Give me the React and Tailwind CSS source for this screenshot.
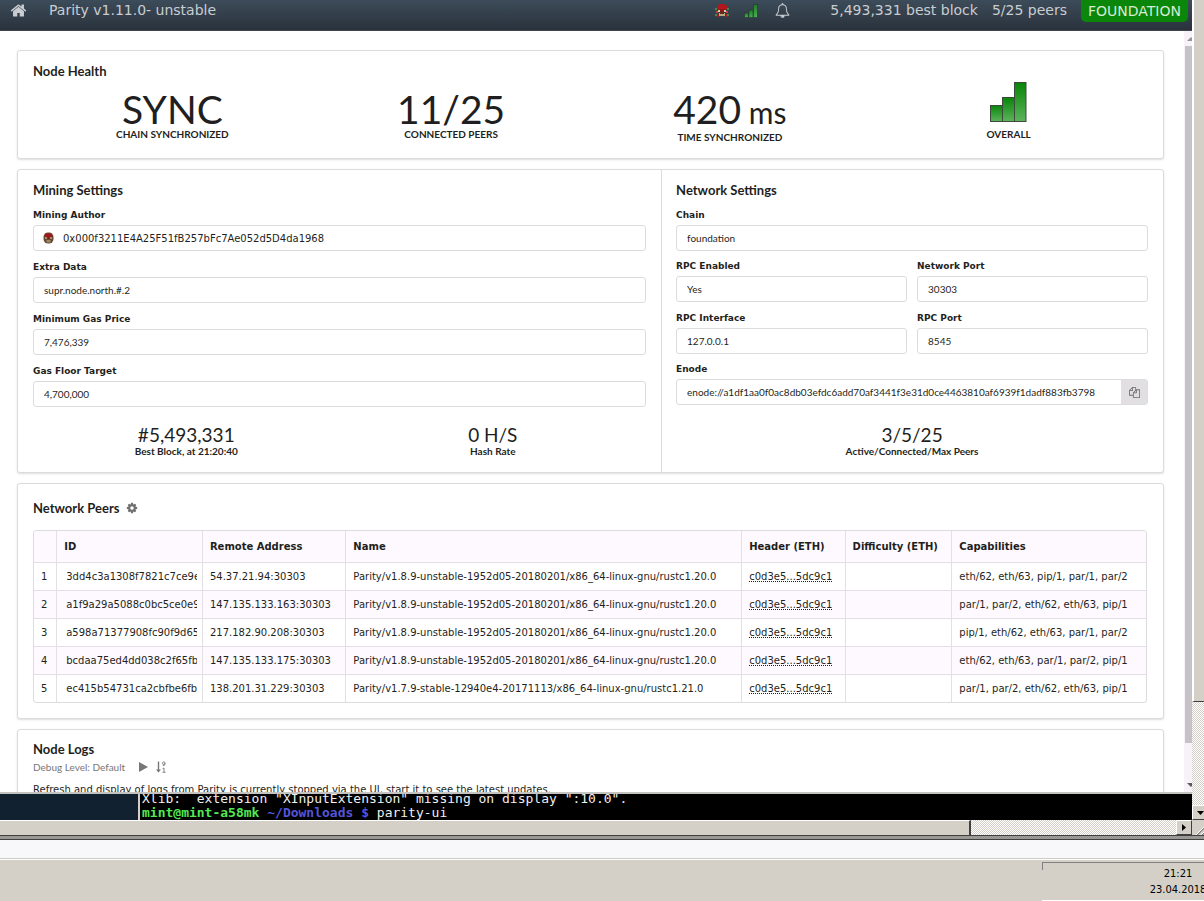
import React from "react";

const LATO = "font-['Lato',sans-serif]";
const DITHER = "bg-[repeating-conic-gradient(#ffffff_0_25%,#d4d0c8_0_50%)] bg-[length:2px_2px]";
const RAISED = "border border-t-white border-l-white border-r-[#404040] border-b-[#404040] bg-[#d4d0c8]";

const PATHS = {
  home: "M1472 992v480q0 26-19 45t-45 19h-384v-384h-256v384h-384q-26 0-45-19t-19-45v-480q0-1 .5-3t.5-3l575-474 575 474q1 2 1 6zm223-69l-62 74q-8 9-21 11h-3q-13 0-21-7l-692-577-692 577q-12 8-24 7-13-2-21-11l-62-74q-8-10-7-23.5t11-21.5l719-599q32-26 76-26t76 26l244 204v-195q0-14 9-23t23-9h192q14 0 23 9t9 23v408l219 182q10 8 11 21.5t-7 23.5z",
  bell: "M912 1696q0-16-16-16-59 0-101.5-42.5t-42.5-101.5q0-16-16-16t-16 16q0 73 51.5 124.5t124.5 51.5q16 0 16-16zm-666-288h1300q-266-300-266-832 0-51-24-105t-69-103-121.5-80.5-169.5-31.5-169.5 31.5-121.5 80.5-69 103-24 105q0 532-266 832zm1482 0q0 52-38 90t-90 38h-448q0 106-75 181t-181 75-181-75-75-181h-448q-52 0-90-38t-38-90q50-42 91-88t85-119.5 74.5-158.5 50-206 19.5-260q0-152 117-282.5t307-158.5q-8-19-8-39 0-40 28-68t68-28 68 28 28 68q0 20-8 39 190 28 307 158.5t117 282.5q0 139 19.5 260t50 206 74.5 158.5 85 119.5 91 88z",
  copy: "M1696 384q40 0 68 28t28 68v1216q0 40-28 68t-68 28h-960q-40 0-68-28t-28-68v-288h-544q-40 0-68-28t-28-68v-672q0-40 20-88t48-76l408-408q28-28 76-48t88-20h416q40 0 68 28t28 68v328q68-40 128-40h416zm-544 213l-299 299h299v-299zm-640-384l-299 299h299v-299zm196 647l316-316v-416h-384v416q0 40-28 68t-68 28h-416v640h512v-256q0-40 20-88t48-76zm956 804v-1152h-384v416q0 40-28 68t-68 28h-416v640h896z",
  cog: "M1152 896q0-106-75-181t-181-75-181 75-75 181 75 181 181 75 181-75 75-181zm512-109v222q0 12-8 23t-20 13l-185 28q-19 54-39 91 35 50 107 138 10 12 10 25t-9 23q-27 37-99 108t-94 71q-12 0-26-9l-138-108q-44 23-91 38-16 136-29 186-7 28-36 28h-222q-14 0-24.5-8.5t-11.5-21.5l-28-184q-49-16-90-37l-141 107q-10 9-25 9-14 0-25-11-126-114-165-168-7-10-7-23 0-12 8-23 15-21 51-66.5t54-70.5q-27-50-41-99l-183-27q-13-2-21-12.5t-8-23.5v-222q0-12 8-23t19-13l186-28q14-46 39-92-40-57-107-138-10-12-10-24 0-10 9-23 26-36 98.5-107.5t94.5-71.5q13 0 26 10l138 107q44-23 91-38 16-136 29-186 7-28 36-28h222q14 0 24.5 8.5t11.5 21.5l28 184q49 16 90 37l142-107q9-9 24-9 13 0 25 10 129 119 165 170 7 8 7 22 0 12-8 23-15 21-51 66.5t-54 70.5q26 50 41 98l183 28q13 2 21 12.5t8 23.5z",
};

function Icon({ name, className }) {
  return (
    <svg viewBox="0 0 1792 1792" className={`shrink-0 fill-current ${className}`} aria-hidden="true">
      <path d={PATHS[name]} />
    </svg>
  );
}

function Creature() {
  return (
    <svg viewBox="0 0 16 16" className="size-4 shrink-0" aria-hidden="true">
      <path d="M6 2h4l3 2v3l-2 1H5L3 7V4z" fill="#b3161c" />
      <path d="M1 6h2v2H1zM13 6h2v2h-2zM1 12h2v2H1zM13 12h2v2h-2z" fill="#3f8a48" />
      <path d="M4 7h8v3H4z" fill="#8f1a1c" />
      <path d="M4 8h2v2H4zM10 8h2v2h-2z" fill="#d8cf9c" />
      <path d="M2 9h2v2H2zM12 9h2v2h-2z" fill="#c8442e" />
      <path d="M5 11h6v3H5z" fill="#b5a97c" />
      <path d="M6 10h4v2H6z" fill="#5e2a22" />
      <path d="M3 12h2v3H3zM11 12h2v3h-2z" fill="#b3161c" />
    </svg>
  );
}

function Avatar() {
  return (
    <svg viewBox="0 0 11 12" className="h-3 w-[11px] shrink-0" aria-hidden="true">
      <rect x="0.5" y="0.5" width="10" height="11" rx="4.5" fill="#6b4a35" />
      <path d="M2.500 1.500h6l1 3.500h-8z" fill="#a3161b" />
      <path d="M2 5h2v2H2zM7 5h2v2H7z" fill="#a98f68" />
      <path d="M3.500 8h4v2.500h-4z" fill="#998b60" />
      <path d="M4.500 5h2v2h-2z" fill="#7c1f1c" />
    </svg>
  );
}

function SmallSignal() {
  return (
    <svg viewBox="0 0 14 14" className="size-3.5 shrink-0" aria-hidden="true">
      <defs>
        <linearGradient id="small-bar" x1="0" y1="0" x2="0" y2="1">
          <stop offset="0" stopColor="#1b7d22" />
          <stop offset="1" stopColor="#4fae55" />
        </linearGradient>
      </defs>
      <g fill="url(#small-bar)" stroke="#22382f" strokeWidth="0.6">
        <rect x="0.5" y="9" width="4" height="4.500" />
        <rect x="5" y="6" width="4" height="7.500" />
        <rect x="9.500" y="0.5" width="4" height="13" />
      </g>
    </svg>
  );
}

function BigSignal() {
  return (
    <svg viewBox="0 0 37 40" className="-mt-[9px] mb-[5px] h-10 w-[37px]" role="img" aria-label="Good">
      <defs>
        <linearGradient id="bar" x1="0" y1="0" x2="0" y2="1">
          <stop offset="0" stopColor="#078607" />
          <stop offset="1" stopColor="#5db35d" />
        </linearGradient>
      </defs>
      <g fill="url(#bar)" stroke="#3f4a3f">
        <rect x="0.5" y="23.5" width="12" height="16" />
        <rect x="12.500" y="15.500" width="12" height="24" />
        <rect x="24.500" y="0.5" width="11.500" height="39" />
      </g>
    </svg>
  );
}

function SortDescending() {
  return (
    <svg viewBox="0 0 10 12" className="h-3 w-2.5" fill="none" stroke="currentColor" aria-hidden="true">
      <path d="M2.500 0.500V9" strokeWidth="1.400" />
      <path d="M0 8.500h5L2.500 11.500z" fill="currentColor" stroke="none" />
      <circle cx="7.800" cy="2.200" r="1.300" strokeWidth="0.900" />
      <path d="M9.100 2.200Q9.100 4.800 6.800 4.800" strokeWidth="0.900" />
      <path d="M6.600 7.600L8 7v4.300M6.500 11.300h3" strokeWidth="0.900" />
    </svg>
  );
}

function Card({ className = "", children }) {
  return (
    <section className={`rounded-[3px] border border-[#dcdcde] bg-white shadow-[0_1px_2px_rgba(34,36,38,0.15)] ${className}`}>
      {children}
    </section>
  );
}

function Title({ children }) {
  return <h2 className={`${LATO} text-[13px] font-bold leading-4`}>{children}</h2>;
}

function BigStat({ label, children }) {
  return (
    <div className={`${LATO} flex flex-col items-center`}>
      {children}
      <div className="text-[10px] font-bold leading-[14px]">{label}</div>
    </div>
  );
}

function Stat({ value, label }) {
  return (
    <div className={`${LATO} text-center`}>
      <div className="text-[19px] leading-[21px]">{value}</div>
      <div className="text-[10px] font-bold leading-3">{label}</div>
    </div>
  );
}

function Field({ id, label, value, icon, action }) {
  return (
    <div className="flex min-w-0 flex-col gap-1">
      <label htmlFor={id} className="text-[9px] font-bold leading-3">{label}</label>
      <div className="flex h-[26px] overflow-hidden rounded-[3px] border border-[#dcdcde]">
        {icon && <span className="flex items-center pl-[9px]">{icon}</span>}
        <input
          id={id}
          readOnly
          defaultValue={value}
          className={`min-w-0 flex-1 bg-transparent text-[10px] outline-none ${icon ? "px-[9px]" : "px-2.5 font-['Lato',sans-serif]"}`}
        />
        {action}
      </div>
    </div>
  );
}

const PEERS = [
  ["3dd4c3a1308f7821c7ce9e", "54.37.21.94:30303", "Parity/v1.8.9-unstable-1952d05-20180201/x86_64-linux-gnu/rustc1.20.0", "eth/62, eth/63, pip/1, par/1, par/2"],
  ["a1f9a29a5088c0bc5ce0e9", "147.135.133.163:30303", "Parity/v1.8.9-unstable-1952d05-20180201/x86_64-linux-gnu/rustc1.20.0", "par/1, par/2, eth/62, eth/63, pip/1"],
  ["a598a71377908fc90f9d65", "217.182.90.208:30303", "Parity/v1.8.9-unstable-1952d05-20180201/x86_64-linux-gnu/rustc1.20.0", "pip/1, eth/62, eth/63, par/1, par/2"],
  ["bcdaa75ed4dd038c2f65fb", "147.135.133.175:30303", "Parity/v1.8.9-unstable-1952d05-20180201/x86_64-linux-gnu/rustc1.20.0", "eth/62, eth/63, par/1, par/2, pip/1"],
  ["ec415b54731ca2cbfbe6fb", "138.201.31.229:30303", "Parity/v1.7.9-stable-12940e4-20171113/x86_64-linux-gnu/rustc1.21.0", "par/1, par/2, eth/62, eth/63, pip/1"],
];

function PeersTable() {
  const cell = "border-t border-l border-[#e3dfe4] px-[7px] first:border-l-0";
  return (
    <div className="mt-3.5 mr-px overflow-hidden rounded-[3px] border border-[#dcdcde]">
      <table className="w-full table-fixed border-separate border-spacing-0 whitespace-nowrap text-left text-[10px] leading-3">
        <colgroup>
          <col className="w-[2%]" />
          <col className="w-[13.1%]" />
          <col className="w-[12.9%]" />
          <col className="w-[35.6%]" />
          <col className="w-[9.3%]" />
          <col className="w-[9.6%]" />
          <col />
        </colgroup>
        <thead>
          <tr className="h-[31px] bg-[#fdf9fe]">
            {["", "ID", "Remote Address", "Name", "Header (ETH)", "Difficulty (ETH)", "Capabilities"].map((h) => (
              <th key={h} className="border-l border-[#e3dfe4] px-[7px] font-bold first:border-l-0">{h}</th>
            ))}
          </tr>
        </thead>
        <tbody>
          {PEERS.map(([id, address, name, caps], i) => (
            <tr key={id} className="h-7 even:bg-[#fdf9fe]">
              <td className={cell}>{i + 1}</td>
              <td className="border-t border-l border-[#e3dfe4] pr-[5px] pl-[9px]">
                <div className="overflow-hidden">{id}</div>
              </td>
              <td className={cell}>{address}</td>
              <td className={cell}>{name}</td>
              <td className={cell}>
                <span className="underline decoration-dotted underline-offset-1 [text-decoration-skip-ink:none]">c0d3e5...5dc9c1</span>
              </td>
              <td className={cell}></td>
              <td className={cell}>{caps}</td>
            </tr>
          ))}
        </tbody>
      </table>
    </div>
  );
}

function Header() {
  return (
    <header className="flex h-[31px] shrink-0 items-start border-b border-[#3f464d] bg-gradient-to-b from-[#3d4c5a] to-[#29323c] pr-1 pl-2.5 text-[14px] leading-5 text-[#c9cdd1]">
      <a href="#home" aria-label="Home" className="flex h-5 items-center">
        <Icon name="home" className="size-[17px]" />
      </a>
      <span className="ml-[22px]">Parity v1.11.0- unstable</span>
      <div className="ml-auto flex items-start">
        <span className="flex h-5 items-center"><Creature /></span>
        <span className="ml-3.5 flex h-[22px] items-center"><SmallSignal /></span>
        <button type="button" aria-label="Notifications" className="ml-[17px] flex h-5 items-center">
          <Icon name="bell" className="size-[15px]" />
        </button>
        <span className="ml-10">5,493,331 best block</span>
        <span className="ml-3.5">5/25 peers</span>
        <span className="ml-3.5 rounded-b-[5px] bg-[#0a860a] px-[7px] leading-[22px] text-[#d5ecd5]">FOUNDATION</span>
      </div>
    </header>
  );
}

function Dashboard() {
  return (
    <main className="flex min-w-0 flex-1 flex-col gap-2.5 overflow-hidden bg-white pt-[19px] pr-5 pl-[17px]">
      <Card className="shrink-0 px-[15px] pt-3 pb-3.5">
        <Title>Node Health</Title>
        <div className="mt-3 grid grid-cols-4">
          <BigStat label="CHAIN SYNCHRONIZED">
            <div className="text-[39px] leading-9">SYNC</div>
          </BigStat>
          <BigStat label="CONNECTED PEERS">
            <div className="text-[39px] leading-9">11/25</div>
          </BigStat>
          <BigStat label="TIME SYNCHRONIZED">
            <div className="text-[39px] leading-9">420<span className="text-[30px]"> ms</span></div>
          </BigStat>
          <BigStat label="OVERALL">
            <BigSignal />
          </BigStat>
        </div>
      </Card>

      <Card className="grid shrink-0 grid-cols-[9fr_7fr]">
        <div className="flex flex-col border-r border-[#dcdcde] px-[15px] pt-3 pb-[15px]">
          <Title>Mining Settings</Title>
          <div className="mt-[11px] flex flex-col gap-2.5">
            <Field id="author" label="Mining Author" value="0x000f3211E4A25F51fB257bFc7Ae052d5D4da1968" icon={<Avatar />} />
            <Field id="extra" label="Extra Data" value="supr.node.north.#.2" />
            <Field id="gas-price" label="Minimum Gas Price" value="7,476,339" />
            <Field id="gas-floor" label="Gas Floor Target" value="4,700,000" />
          </div>
          <div className="mt-[17px] grid grid-cols-2">
            <Stat value="#5,493,331" label="Best Block, at 21:20:40" />
            <Stat value="0 H/S" label="Hash Rate" />
          </div>
        </div>
        <div className="flex flex-col pt-3 pr-[15px] pb-[15px] pl-3.5">
          <Title>Network Settings</Title>
          <div className="mt-[11px] flex flex-col gap-[9px]">
            <Field id="chain" label="Chain" value="foundation" />
            <div className="grid grid-cols-2 gap-x-2.5 gap-y-2.5">
              <Field id="rpc-enabled" label="RPC Enabled" value="Yes" />
              <Field id="net-port" label="Network Port" value="30303" />
              <Field id="rpc-if" label="RPC Interface" value="127.0.0.1" />
              <Field id="rpc-port" label="RPC Port" value="8545" />
            </div>
            <Field
              id="enode"
              label="Enode"
              value="enode://a1df1aa0f0ac8db03efdc6add70af3441f3e31d0ce4463810af6939f1dadf883fb3798"
              action={
                <button type="button" aria-label="Copy enode" className="flex w-[26px] items-center justify-center bg-[#e2dfe2] text-[#6b696c]">
                  <Icon name="copy" className="size-[11px]" />
                </button>
              }
            />
          </div>
          <div className="mt-auto">
            <Stat value="3/5/25" label="Active/Connected/Max Peers" />
          </div>
        </div>
      </Card>

      <Card className="shrink-0 px-[15px] pt-4 pb-[15px]">
        <div className="flex items-center gap-[7px]">
          <Title>Network Peers</Title>
          <button type="button" aria-label="Peer settings" className="text-[#6f6f71]">
            <Icon name="cog" className="size-3" />
          </button>
        </div>
        <PeersTable />
      </Card>

      <Card className="shrink-0 px-[15px] pt-[11px] pb-4">
        <Title>Node Logs</Title>
        <div className={`${LATO} flex items-center text-[10px] leading-5 text-[#77777a]`}>
          <span>Debug Level: Default</span>
          <button type="button" aria-label="Start logs" className="ml-3.5">
            <svg viewBox="0 0 9 10" className="h-2.5 w-[9px] fill-current"><path d="M0 0l9 5-9 5z" /></svg>
          </button>
          <button type="button" aria-label="Reverse log order" className="ml-2">
            <SortDescending />
          </button>
        </div>
        <p className="mt-[7px] text-[10px] leading-3">
          Refresh and display of logs from Parity is currently stopped via the UI, start it to see the latest updates.
        </p>
      </Card>
    </main>
  );
}

function Terminal() {
  return (
    <div className="flex h-7 shrink-0 border-t-2 border-[#c4c3c0] bg-black">
      <div className="w-[138px] bg-[#122130]"></div>
      <div className="flex min-w-0 flex-1 flex-col justify-end overflow-hidden whitespace-pre border-l-2 border-[#d4d0c8] pl-0.5 font-['DejaVu_Sans_Mono',monospace] text-[13px] leading-[14px] text-[#f0f0f0]">
        <div>{'Xlib:  extension "XInputExtension" missing on display ":10.0".'}</div>
        <div>
          <b className="text-[#54e854]">mint@mint-a58mk</b>
          <b className="text-[#5454d8]"> ~/Downloads $</b> parity-ui
        </div>
      </div>
    </div>
  );
}

export default function App() {
  return (
    <div className="flex h-screen flex-col overflow-hidden bg-[#d4d0c8] font-['DejaVu_Sans',sans-serif] text-[#1f1f21]">
      <div className="flex min-h-0 flex-1">
        <div className="flex min-w-0 flex-1 flex-col">
          <Header />
          <div className="flex min-h-0 flex-1">
            <Dashboard />
            <div className="flex w-2 shrink-0 flex-col items-end overflow-hidden bg-[#f6f2f8]">
              <svg viewBox="0 0 5 15" className="h-[15px] w-[5px] shrink-0 fill-[#98969a]"><path d="M0 10l4-4 4 4z" /></svg>
              <div className="w-[7px] flex-[697] bg-[#c4c2c7]"></div>
              <div className="flex-[34]"></div>
              <svg viewBox="0 0 5 15" className="h-[15px] w-[5px] shrink-0 fill-[#5c5a5e]"><path d="M0 6l4 4 4-4z" /></svg>
            </div>
          </div>
          <Terminal />
        </div>
        <div className="flex w-3 shrink-0 flex-col overflow-hidden">
          <div className="flex-[702] border-b border-l-2 border-b-[#404040] border-l-white bg-[#d4d0c8]"></div>
          <div className={`flex-[103] ${DITHER}`}></div>
          <button type="button" aria-label="Scroll down" className={`flex h-[15px] w-4 shrink-0 items-center justify-center ${RAISED}`}>
            <svg viewBox="0 0 7 4" className="h-1 w-[7px]"><path d="M0 0h7L3.500 4z" /></svg>
          </button>
        </div>
      </div>

      <div className="flex h-[15px] shrink-0">
        <div className="flex-[971] border-t border-r-2 border-t-white border-r-[#404040] bg-[#d4d0c8]"></div>
        <div className={`flex-[205] ${DITHER}`}></div>
        <button type="button" aria-label="Scroll right" className={`flex w-4 shrink-0 items-center justify-center ${RAISED}`}>
          <svg viewBox="0 0 4 7" className="h-[7px] w-1"><path d="M0 0v7l4-3.500z" /></svg>
        </button>
        <svg viewBox="0 0 12 15" className="h-[15px] w-3 shrink-0" fill="none">
          <path d="M5 15L16 4M10 15l8-8" stroke="#808080" strokeWidth="1.500" />
          <path d="M4 15L15 4M9 15l8-8" stroke="#ffffff" />
        </svg>
      </div>
      <div className="h-[5px] shrink-0 border-y border-[#404040] bg-[#9a9894]"></div>
      <div className="h-[19px] shrink-0 border-b border-[#cfccc6] bg-[#f8f8fb]"></div>
      <footer className="flex h-[42px] shrink-0 justify-end border-t border-white">
        <div className="mt-0.5 flex w-[162px] justify-end border-t border-b border-t-[#808080] border-b-white bg-[linear-gradient(#808080,#808080)] bg-[length:1px_7px] bg-no-repeat">
          <time className="-mr-1 w-[60px] whitespace-nowrap pt-[3px] text-center font-['DejaVu_Sans_Condensed','DejaVu_Sans',sans-serif] text-[11px] leading-4 text-black">
            21:21<br />23.04.2018
          </time>
        </div>
      </footer>
    </div>
  );
}
